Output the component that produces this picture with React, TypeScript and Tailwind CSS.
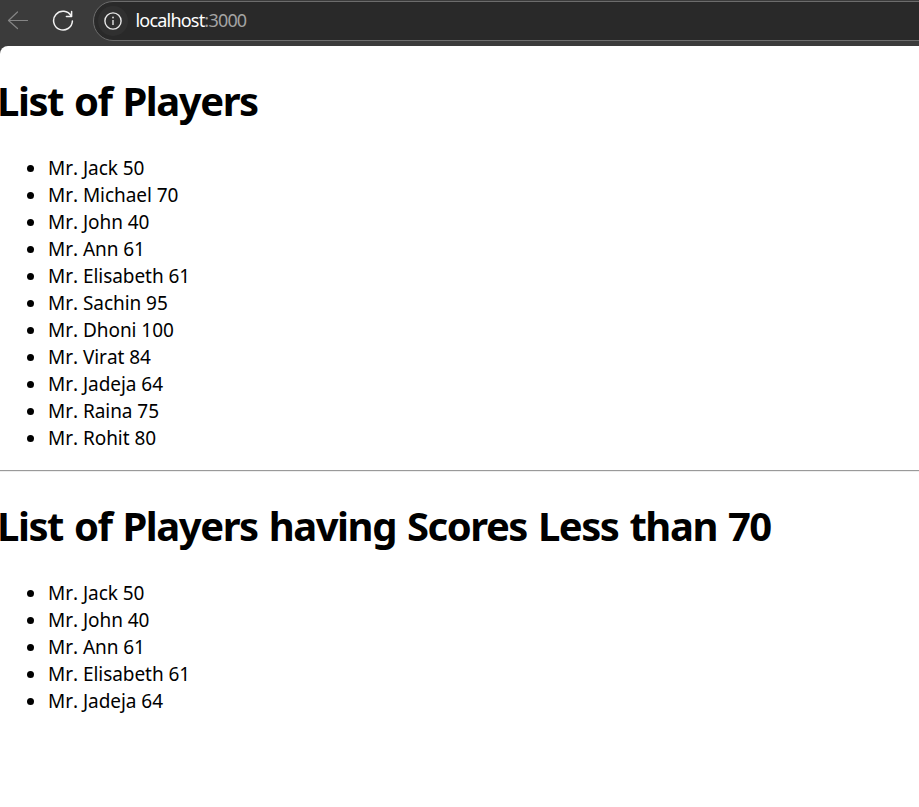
type Player = { name: string; score: number };

const players: Player[] = [
  { name: 'Jack', score: 50 },
  { name: 'Michael', score: 70 },
  { name: 'John', score: 40 },
  { name: 'Ann', score: 61 },
  { name: 'Elisabeth', score: 61 },
  { name: 'Sachin', score: 95 },
  { name: 'Dhoni', score: 100 },
  { name: 'Virat', score: 84 },
  { name: 'Jadeja', score: 64 },
  { name: 'Raina', score: 75 },
  { name: 'Rohit', score: 80 },
];

function BrowserBar() {
  return (
    <header className="flex h-[46px] items-start overflow-hidden bg-[#3b3b3b]">
      <svg className="mt-2.5 ml-[7px] h-[21px] w-[22px] shrink-0" viewBox="0 0 22 21" fill="none" stroke="#858585" strokeWidth="1.2" strokeLinecap="round" strokeLinejoin="round">
        <path d="M20.5 10.5H1.5M10.5 2 1.5 10.5l9 8" />
      </svg>
      <svg className="mt-2.5 ml-[23px] h-[22px] w-[22px] shrink-0" viewBox="0 0 22 22" fill="none" stroke="#f2f2f2" strokeWidth="1.5" strokeLinecap="round" strokeLinejoin="round">
        <path d="M19.2 6A9.4 9.4 0 1 0 20.4 11M19.6 1.5v5h-5.2" />
      </svg>
      <div className="mt-px -mr-6 ml-[19px] flex h-10 flex-1 items-center rounded-full border border-[#6c6c6c] bg-[#292929] pl-1">
        <span className="flex size-[30px] shrink-0 items-center justify-center rounded-full bg-[#303030]">
          <svg className="size-[18px]" viewBox="0 0 18 18" fill="none">
            <circle cx="9" cy="9" r="8.1" stroke="#e8e8e8" strokeWidth="1.4" />
            <path d="M9 8v5" stroke="#cfcfcf" strokeWidth="1.6" />
            <circle cx="9" cy="5.6" r="1" fill="#cfcfcf" />
          </svg>
        </span>
        <span className="mb-0.5 ml-[7.5px] text-[18px] leading-6 tracking-[-0.8px] text-white">
          localhost<span className="text-[#a3a3a3]">:3000</span>
        </span>
      </div>
    </header>
  );
}

function PlayerList({ items }: { items: Player[] }) {
  return (
    <ul className="list-disc pl-12 text-[19px] leading-[27px] tracking-[-0.05px] [font-kerning:none]">
      {items.map((p) => (
        <li key={p.name} className="h-[27px] marker:text-[21px]">
          <span>Mr. {p.name} {p.score}</span>
        </li>
      ))}
    </ul>
  );
}

export default function App() {
  return (
    <div className="h-[807px] overflow-hidden bg-[#3b3b3b] font-['Noto_Sans','Open_Sans',sans-serif] text-black">
      <BrowserBar />
      <main className="h-[761px] overflow-hidden rounded-tl-[8px] bg-white">
        <h1 className="mt-[28px] -ml-[3px] h-[55px] text-[40px] leading-[54px] font-bold tracking-[-1.45px] [word-spacing:2px] whitespace-nowrap">List of Players</h1>
        <div className="mt-[25px]">
          <PlayerList items={players} />
        </div>
        <hr className="mt-[19px] h-0.5 border-t border-b border-t-[#9a9a9a] border-b-[#eeeeee]" />
        <h1 className="mt-[27px] -ml-[3px] h-[55px] text-[40px] leading-[54px] font-bold tracking-[-1.45px] [word-spacing:2px] whitespace-nowrap">List of Players having Scores Less than 70</h1>
        <div className="mt-[25px]">
          <PlayerList items={players.filter((p) => p.score < 70)} />
        </div>
      </main>
    </div>
  );
}
